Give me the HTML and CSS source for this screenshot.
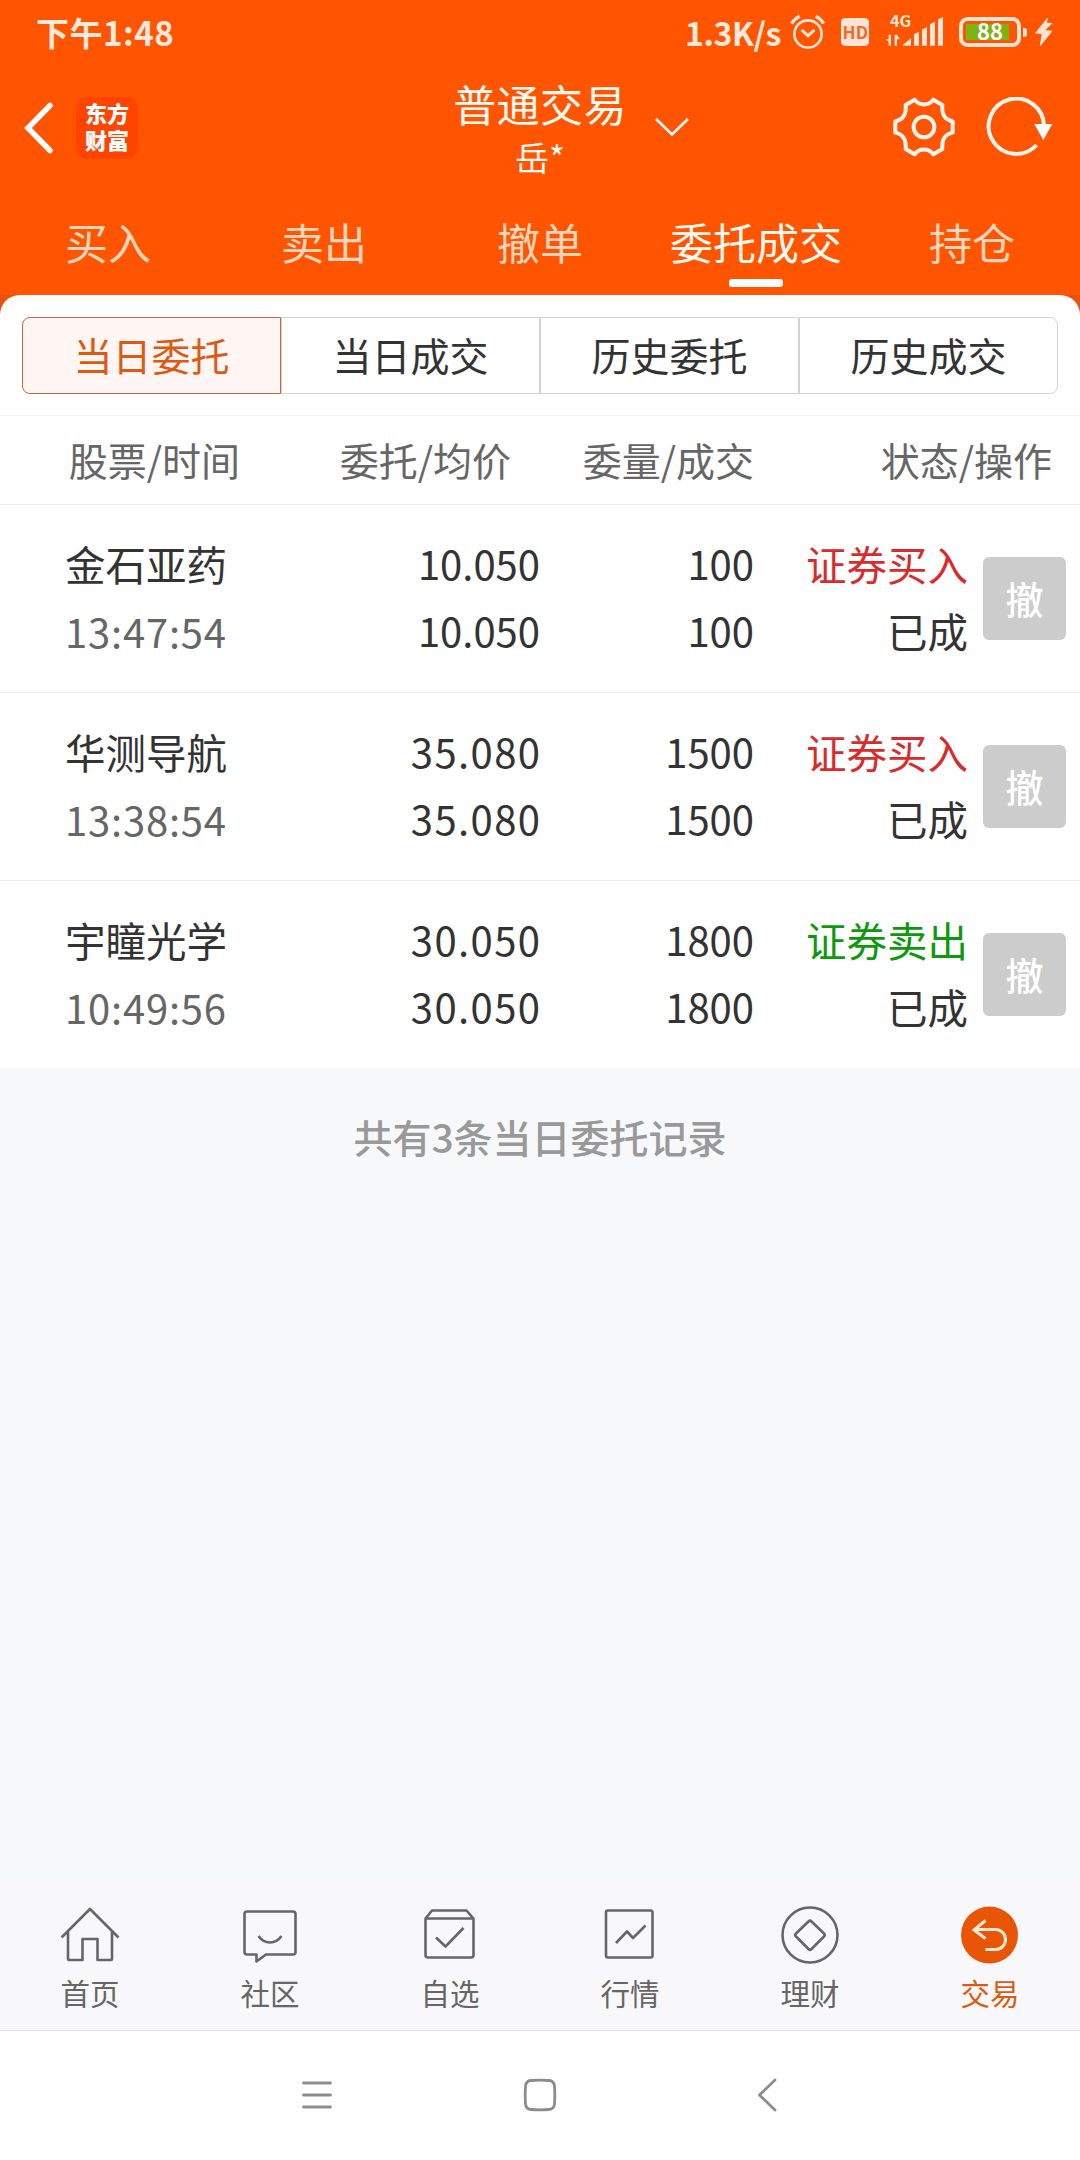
FILE: index.html
```html
<!DOCTYPE html>
<html lang="zh-CN">
<head>
<meta charset="utf-8">
<title>普通交易</title>
<link rel="stylesheet" href="styles.css">
</head>
<body>
<header class="top">
  <div class="status-bar">
    <span class="clock">下午1:48</span>
    <div class="status-right">
      <span class="speed">1.3K/s</span>
      <svg class="status-icons" width="265" height="48" viewBox="1047 27 795 144">
        <g transform="translate(660 0)" fill="none" stroke="#ffe4d6" stroke-width="8">
          <circle cx="444" cy="105" r="41"/>
          <path d="M427 95l17 15 17-15" stroke-width="9" stroke-linecap="round"/>
          <path d="M395 74q8-14 24-22M491 74q-8-14-24-22" stroke-width="10"/>
          <rect x="543" y="57" width="84" height="84" rx="13" fill="#ffe4d6" stroke="none"/>
          <g fill="#ffe4d6" stroke="none">
            <path d="M729 140v-3l24-19v22zM762 140v-34l15-8v42zM786 140V92l15-8v56zM810 140V76l15-8v72zM834 140V61l15-7v86z"/>
            <path d="M686 140V128l-8-8h8v-13h7v33zM704 107v33h7v-19h8l-8-14z"/>
          </g>
          <rect x="903" y="60" width="174" height="78" rx="20" stroke-width="12"/>
          <path d="M918 75h129v48H918z" fill="#7cb312" stroke="none"/>
          <path d="M1089 86q12 0 12 8v12q0 8-12 8z" fill="#ffe4d6" stroke="none"/>
          <path d="M1164 54l-39 49 20 2-6 39 39-49-22-1 22-22-17-1z" fill="#ffe4d6" stroke="none"/>
        </g>
        <g transform="translate(660 0)" class="status-text">
          <text x="586" y="120" font-size="52" fill="#f2692a" text-anchor="middle">HD</text>
          <text x="722" y="84" font-size="49" fill="#ffe4d6" text-anchor="middle">4G</text>
          <text x="990" y="124" font-size="66" fill="#fff" text-anchor="middle">88</text>
        </g>
      </svg>
    </div>
  </div>

  <div class="title-bar">
    <div class="title-left">
      <svg width="34" height="56" viewBox="0 0 34 56"><path d="M29 5.500L7 28l22 22.500" fill="none" stroke="#fff" stroke-width="5.500" stroke-linecap="round"/></svg>
      <div class="logo"><span>东方</span><span>财富</span></div>
    </div>
    <div class="title-mid">
      <div class="title">普通交易</div>
      <div class="user">岳*</div>
    </div>
    <div class="title-right">
      <svg class="caret" width="36" height="22" viewBox="0 0 36 22"><path d="M2 3l16 15.500L34 3" fill="none" stroke="#fff" stroke-width="2.600"/></svg>
      <svg width="62" height="60" viewBox="700 291 186 180" fill="none" stroke="#fff4ec" stroke-width="12" stroke-linejoin="round">
        <path d="M821 299L848 315C846 340 852 358 879 364V398C852 404 846 422 848 447L821 463C808 444 778 444 765 463L738 447C740 422 734 404 707 398V364C734 358 740 340 738 315L765 299C778 318 808 318 821 299Z"/>
        <circle cx="793" cy="381" r="31"/>
      </svg>
      <svg class="refresh" width="68" height="60" viewBox="977 294 204 180">
        <path d="M1151 384A83 83 0 1 0 1129 438" fill="none" stroke="#fff4ec" stroke-width="12"/>
        <path d="M1122 375h54l-27 48z" fill="#fff"/>
      </svg>
    </div>
  </div>

  <nav class="tabs">
    <a>买入</a><a>卖出</a><a>撤单</a><a class="on">委托成交</a><a>持仓</a>
  </nav>
</header>

<main class="content">
  <section class="panel">
    <div class="segments">
      <a class="on">当日委托</a><a>当日成交</a><a>历史委托</a><a>历史成交</a>
    </div>
    <div class="list-head">
      <span>股票/时间</span><span>委托/均价</span><span>委量/成交</span><span>状态/操作</span>
    </div>
    <div class="row">
      <div class="name">金石亚药<br><span class="time">13:47:54</span></div>
      <div class="num">10.050<br>10.050</div>
      <div class="num">100<br>100</div>
      <div class="state"><span class="buy">证券买入</span><br>已成</div>
      <button class="cancel">撤</button>
    </div>
    <div class="row">
      <div class="name">华测导航<br><span class="time">13:38:54</span></div>
      <div class="num wide">35.080<br>35.080</div>
      <div class="num">1500<br>1500</div>
      <div class="state"><span class="buy">证券买入</span><br>已成</div>
      <button class="cancel">撤</button>
    </div>
    <div class="row">
      <div class="name">宇瞳光学<br><span class="time">10:49:56</span></div>
      <div class="num wide">30.050<br>30.050</div>
      <div class="num">1800<br>1800</div>
      <div class="state"><span class="sell">证券卖出</span><br>已成</div>
      <button class="cancel">撤</button>
    </div>
  </section>
  <p class="summary">共有3条当日委托记录</p>
</main>

<nav class="tabbar">
  <a>
    <svg width="64" height="64" viewBox="0 0 64 64"><path d="M3.500 35.500L32 7l28.500 28.500M10 29.500V57q0 1 1 1h13.500V37h15v21H53q1 0 1-1V29.500"/></svg>
    <span>首页</span>
  </a>
  <a>
    <svg width="64" height="64" viewBox="0 0 64 64"><path d="M9 9.500h46q2.500 0 2.500 2.500v38q0 2.500-2.500 2.500H28l-9.500 7v-7H9q-2.500 0-2.500-2.500V12q0-2.500 2.500-2.500zM20.500 34q4.500 6.500 11.500 6.500T43.500 34"/></svg>
    <span>社区</span>
  </a>
  <a>
    <svg width="64" height="64" viewBox="0 0 64 64"><path d="M14 8.500h34.500l7 8V53q0 2.500-2.500 2.500H10Q7.500 55.500 7.500 53V16.500zM7.500 16.500h48M18 35.500l9.500 9 18-18.500"/></svg>
    <span>自选</span>
  </a>
  <a>
    <svg width="64" height="64" viewBox="0 0 64 64"><rect x="8" y="8.500" width="46.500" height="47" rx="2"/><path d="M18 41l11-11.500 6 6.500 12.500-12.500"/></svg>
    <span>行情</span>
  </a>
  <a>
    <svg width="64" height="64" viewBox="0 0 64 64"><circle cx="32" cy="33" r="27.500"/><path d="M30.500 19.500q1.500-1.500 3 0L46 31.500q1.500 1.500 0 3L33.500 47q-1.500 1.500-3 0L18 34.500q-1.500-1.500 0-3z"/></svg>
    <span>理财</span>
  </a>
  <a class="on">
    <svg width="64" height="64" viewBox="0 0 64 64"><circle class="disc" cx="31.500" cy="33" r="28.500"/><path class="arrow" d="M27.500 18.500L16 28 27.500 36.500M16 27.500H37.500a10 10 0 0 1 0 20H27.500"/></svg>
    <span>交易</span>
  </a>
</nav>

<footer class="sysnav">
  <svg width="36" height="36" viewBox="0 0 36 36"><path d="M4.500 6h27M4.500 18h27M4.500 30h27"/></svg>
  <svg width="36" height="36" viewBox="0 0 36 36"><path d="M9 3.500Q18 2.800 27 3.500Q32 3.800 32.500 9Q33.200 18 32.500 27Q32 32.200 27 32.500Q18 33.200 9 32.500Q4 32.200 3.500 27Q2.800 18 3.500 9Q4 3.800 9 3.500Z"/></svg>
  <svg width="36" height="36" viewBox="0 0 36 36"><path d="M30 3L14.500 18l15.500 15"/></svg>
</footer>
</body>
</html>
```
FILE: styles.css
```css
* { box-sizing: border-box; }

body {
  margin: 0;
  width: 1080px;
  height: 2160px;
  display: flex;
  flex-direction: column;
  background: #fff;
  color: #333;
  font-family: "Noto Sans CJK SC", "Noto Sans", sans-serif;
  overflow: hidden;
}

svg { display: block; flex: none; }

.top {
  height: 295px;
  background: #ff5500;
  color: #fff9f2;
  flex: none;
}

.status-bar {
  height: 60px;
  padding: 3px 26px 0 36px;
  display: flex;
  justify-content: space-between;
  align-items: center;
  color: #ffe8dc;
  font-size: 33px;
  font-weight: 600;
}
.clock { font-weight: 700; letter-spacing: 0.5px; }
.status-right { display: flex; align-items: center; gap: 8px; }
.speed { font-size: 32px; letter-spacing: -0.4px; font-weight: 700; }
.status-text { font-weight: 700; }

.title-bar {
  height: 137px;
  display: grid;
  grid-template-columns: 1fr 186px 1fr;
}
.title-left { display: flex; align-items: center; padding: 0 0 2px 21px; gap: 21px; }
.logo {
  width: 62px;
  height: 62px;
  padding-bottom: 4px;
  border-radius: 11px;
  background: #ff4400;
  display: flex;
  flex-direction: column;
  justify-content: center;
  font-size: 22px;
  font-weight: 900;
  line-height: 27px;
  text-align: center;
  color: #fff;
}
.title-mid { text-align: center; white-space: nowrap; padding-top: 16px; }
.title { font-size: 43px; line-height: 54px; letter-spacing: 0.4px; }
.user { font-size: 34px; line-height: 54px; }
.title-right { display: flex; align-items: center; padding: 0 26px 3px 21px; }
.caret { margin-right: auto; }
.refresh { margin-left: 31px; }

.tabs { height: 98px; display: flex; }
.tabs a {
  flex: 1;
  display: flex;
  flex-direction: column;
  align-items: center;
  white-space: nowrap;
  font-size: 43px;
  line-height: 88px;
  color: #ffd5bc;
}
.tabs .on { color: #fff9f2; }
.tabs .on::after {
  content: "";
  width: 54px;
  height: 8px;
  margin-top: -6px;
  border-radius: 3px;
  background: #fff;
}

.content { flex: 1; background: #f7f8fa; }
.panel { background: linear-gradient(#e65310 22px, #fff 22px); }

.segments {
  height: 121px;
  padding: 22px 22px 21px;
  display: flex;
  background: #fff;
  border-radius: 20px 20px 0 0;
  border-bottom: 1px solid #f3f3f3;
}
.segments a {
  flex: 1;
  border: 1px solid #d3d3d5;
  font-size: 39px;
  line-height: 73px;
  text-align: center;
}
.segments a:first-child { border-radius: 8px 0 0 8px; }
.segments a:last-child { border-radius: 0 8px 8px 0; }
.segments .on { color: #dc5a14; background: #fff6f3; border-color: #bd6b43; }

.list-head {
  height: 89px;
  display: grid;
  grid-template-columns: 240px 271px 243px 298px;
  border-bottom: 1px solid #ebebeb;
  color: #666;
  font-size: 39px;
  line-height: 87px;
  text-align: right;
}

.row {
  height: 188px;
  display: grid;
  grid-template-columns: 275px 200px 214px 214px 83px;
  padding: 25px 0 0 65px;
  border-bottom: 1px solid #ebebeb;
  font-size: 40.5px;
  line-height: 67px;
  white-space: nowrap;
}
.row:last-child { height: 187px; border-bottom: 0; }
.time, .num { font-size: 40px; }
.time { color: #666; letter-spacing: 0.8px; }
.num, .state { text-align: right; }
.wide { letter-spacing: 1.4px; margin-right: -1.4px; }
.buy { color: #d92b2b; }
.sell { color: #0c9a0c; }
.cancel {
  width: 83px;
  height: 83px;
  margin: 27px 0 0 15px;
  padding: 0 0 2px;
  border: 0;
  border-radius: 6px;
  background: #ccc;
  color: #fff;
  font: 500 38px/81px "Noto Sans CJK SC", sans-serif;
}

.summary {
  margin: 38px 0 0;
  text-align: center;
  font-size: 39px;
  line-height: 60px;
  font-weight: 500;
  color: #999;
}

.tabbar {
  height: 151px;
  flex: none;
  display: flex;
  padding-top: 22px;
  background: #f8f8fa;
  border-bottom: 1px solid #e3e3e3;
}
.tabbar a {
  flex: 1;
  display: flex;
  flex-direction: column;
  align-items: center;
  color: #666;
  font-size: 29.5px;
  line-height: 52px;
}
.tabbar svg { fill: none; stroke: #666; stroke-width: 2.6px; stroke-linejoin: round; }
.tabbar .on { color: #dc5a14; }
.tabbar .disc { fill: #e85504; stroke: none; }
.tabbar .arrow { stroke: #ffe9d6; stroke-width: 3px; stroke-linejoin: miter; }

.sysnav {
  height: 129px;
  padding-bottom: 1px;
  flex: none;
  display: flex;
  justify-content: center;
  align-items: center;
  gap: 187px;
}
.sysnav svg { fill: none; stroke: #8c8c8c; stroke-width: 2.8px; stroke-linecap: round; stroke-linejoin: round; }
```
